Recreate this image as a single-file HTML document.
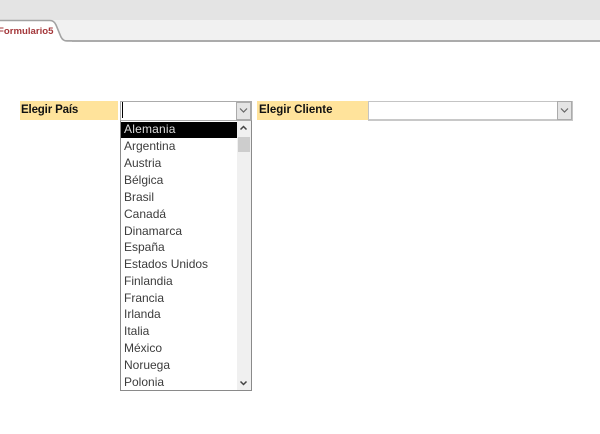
<!DOCTYPE html>
<html><head><meta charset="utf-8"><style>
html,body{margin:0;padding:0;background:#fff}
body{width:600px;height:434px;position:relative;overflow:hidden;font-family:"Liberation Sans",sans-serif}
.a{position:absolute;box-sizing:border-box}
.lab{background:#ffe39b;font:bold 11.5px/19px "Liberation Sans",sans-serif;color:#111;white-space:nowrap;letter-spacing:-.15px}
.it{position:absolute;left:3px;font-size:12px;line-height:17px;color:#3c3c3c;white-space:nowrap;letter-spacing:0}
</style></head><body>
<div class="a" style="left:0;top:0;width:600px;height:20px;background:#e4e4e4"></div>
<div class="a" style="left:0;top:20px;width:600px;height:21px;background:#f1f1f1"></div>
<div class="a" style="left:0;top:40px;width:600px;height:2px;background:#ababab"></div>
<svg class="a" style="left:0;top:18px" width="72" height="26">
<path d="M0 2.5H50Q54 2.5 56 7L61 19Q63 23 67 23H72V26H0Z" fill="#fff"/>
<path d="M0 2.5H50Q54 2.5 56 7L61 19Q63 23 67 23H72" fill="none" stroke="#a3a3a3" stroke-width="1.6"/>
</svg>
<div class="a" style="left:-2px;top:24px;font:bold 9.6px/15px 'Liberation Sans',sans-serif;color:#a4373a;white-space:nowrap">Formulario5</div>

<div class="a lab" style="left:20px;top:101px;width:98px;height:19px;padding-left:1px">Elegir País</div>
<div class="a" style="left:120px;top:101px;width:132px;height:20px;border:1px solid #ababab;background:#fff"></div>
<div class="a" style="left:122px;top:102px;width:1px;height:16px;background:#000"></div>
<div class="a" style="left:236px;top:102px;width:15px;height:18px;background:#e4e4e4;border:1px solid #ababab"></div>
<svg class="a" style="left:239px;top:107px" width="10" height="8"><path d="M1 1.5L4.5 5L8 1.5" fill="none" stroke="#666" stroke-width="1.2"/></svg>

<div class="a lab" style="left:257px;top:101px;width:111px;height:19px;padding-left:2px;letter-spacing:0">Elegir Cliente</div>
<div class="a" style="left:368px;top:101px;width:205px;height:20px;border:1px solid #c4c4c4;border-bottom:2px solid #c8c8c8;background:#fff"></div>
<div class="a" style="left:557px;top:101px;width:15px;height:19px;background:#e4e4e4;border:1px solid #ababab"></div>
<svg class="a" style="left:560px;top:107px" width="10" height="8"><path d="M1 1.5L4.5 5L8 1.5" fill="none" stroke="#666" stroke-width="1.2"/></svg>

<div class="a" style="left:120px;top:120px;width:132px;height:271px;border:1px solid #8a8a8a;border-top:1px solid #ababab;background:#fff">
<div class="a" style="left:0;top:1px;width:116px;height:16px;background:#000"></div>
<div class="a" style="left:116px;top:0;width:14px;height:269px;background:#f0f0f0"></div>
<div class="a" style="left:117px;top:16px;width:12px;height:15px;background:#cdcdcd"></div>
<svg class="a" style="left:118px;top:3px" width="10" height="8"><path d="M1.5 5.5L4.5 2.5L7.5 5.5" fill="none" stroke="#444" stroke-width="1.5"/></svg>
<svg class="a" style="left:118px;top:258px" width="10" height="8"><path d="M1.5 2.5L4.5 5.5L7.5 2.5" fill="none" stroke="#444" stroke-width="1.5"/></svg>
<div class="it" style="top:0;color:#ddd;letter-spacing:.2px">Alemania</div>
<div class="it" style="top:17px">Argentina</div>
<div class="it" style="top:34px">Austria</div>
<div class="it" style="top:51px">Bélgica</div>
<div class="it" style="top:68px">Brasil</div>
<div class="it" style="top:85px">Canadá</div>
<div class="it" style="top:102px">Dinamarca</div>
<div class="it" style="top:118px">España</div>
<div class="it" style="top:135px">Estados Unidos</div>
<div class="it" style="top:152px">Finlandia</div>
<div class="it" style="top:169px">Francia</div>
<div class="it" style="top:185px">Irlanda</div>
<div class="it" style="top:202px">Italia</div>
<div class="it" style="top:219px">México</div>
<div class="it" style="top:236px">Noruega</div>
<div class="it" style="top:253px">Polonia</div>
</div>
</body></html>
